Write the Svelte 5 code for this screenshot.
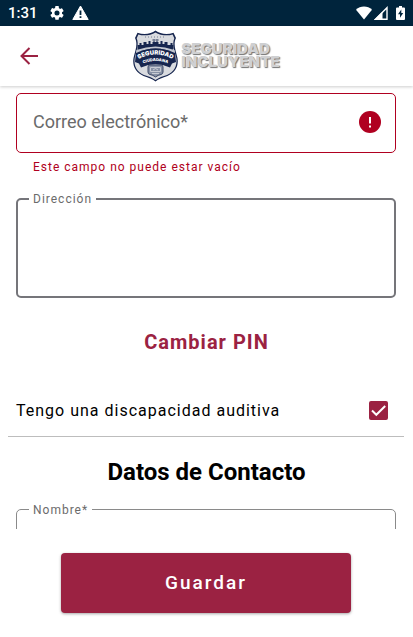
<script>
  let email = $state('');
  let address = $state('');
  let name = $state('');
  let hearing = $state(true);
</script>

<div class="screen">
  <div class="status">
    <div class="group left">
      <span class="time">1:31</span>
      <svg width="14" height="14" viewBox="2 2 20 20" aria-hidden="true"><path fill="#fff" d="M19.14 12.94c.04-.3.06-.61.06-.94s-.02-.64-.07-.94l2.03-1.58a.5.5 0 0 0 .12-.61l-1.92-3.32a.49.49 0 0 0-.59-.22l-2.39.96a7 7 0 0 0-1.62-.94l-.36-2.54A.48.48 0 0 0 13.92 2h-3.84a.48.48 0 0 0-.47.41l-.36 2.54c-.59.24-1.13.57-1.62.94l-2.39-.96a.48.48 0 0 0-.59.22L2.74 8.87a.48.48 0 0 0 .12.61l2.03 1.58a7.5 7.5 0 0 0 0 1.88l-2.03 1.58a.5.5 0 0 0-.12.61l1.92 3.32c.12.22.37.29.59.22l2.39-.96c.5.38 1.03.7 1.62.94l.36 2.54c.05.24.24.41.48.41h3.84c.24 0 .44-.17.47-.41l.36-2.54a7 7 0 0 0 1.62-.94l2.39.96c.22.08.47 0 .59-.22l1.92-3.32a.48.48 0 0 0-.12-.61zM12 15.6a3.6 3.6 0 1 1 0-7.2 3.6 3.6 0 0 1 0 7.2z"/></svg>
      <svg width="17" height="16" viewBox="0 0 17 16" aria-hidden="true"><path fill="#fff" stroke="#fff" stroke-linejoin="round" d="M8.500 1 16.200 14.500H.8z"/><path fill="#00243c" d="M7.600 5.500h1.800v4.500H7.600zM7.600 11.200h1.800V13H7.600z"/></svg>
    </div>
    <div class="group right">
      <svg width="16" height="14" viewBox="0 0 17 14" aria-hidden="true"><path fill="#fff" d="M8.500 14 0 3.500C2.400 1.400 5.300.2 8.500.2s6.100 1.200 8.500 3.300z"/></svg>
      <svg width="14" height="14" viewBox="0 0 14 14" aria-hidden="true"><path fill="none" stroke="#fff" stroke-width="1.400" d="M1.500 13.200H13V1.700z"/><path fill="#fff" d="M0 14 8.500 5.500V14z"/></svg>
      <svg class="battery" width="9" height="14" viewBox="0 0 9 14" aria-hidden="true"><path fill="#fff" d="M3 0h3v1.400h2q1 0 1 1V13q0 1-1 1H1q-1 0-1-1V2.400q0-1 1-1h2z"/><path fill="#00243c" d="M5.300 3.400 2 8.300h2v3.500L7.200 7H5.300z"/></svg>
    </div>
  </div>

  <header>
    <button class="back" type="button" aria-label="Volver">
      <svg width="18" height="18" viewBox="0 0 18 18" aria-hidden="true"><path fill="none" stroke="#9b2242" stroke-width="2" d="M18 9H2M9.500 1 1.500 9l8 8"/></svg>
    </button>
    <div class="brand">
      <svg width="45" height="52" viewBox="0 0 45 52" aria-hidden="true">
        <path fill="#17264f" d="M22.500.5C18 4 11 5 4.500 2.800L2 8c3 6 .5 12-1.500 20-1.500 9 3 15 10 18 5 1.500 9 3 12 5.500C25.500 49 29.500 47.500 34.500 46c7-3 11.500-9 10-18-2-8-4.500-14-1.500-20l-2.500-5.200C34 5 27 4 22.500.5z"/>
        <path fill="#d9dbdf" d="M22.500 2.400C18 5.200 11 6.200 5.400 4.500L3.700 8.200c2.400 6 0 12-2 20-1.200 8 2.500 13.800 9.300 16.900 4 1.300 8.500 2.600 11.500 5 3-2.400 7.500-3.700 11.500-5 6.800-3.100 10.500-8.900 9.300-16.900-2-8-4.400-14-2-20l-1.700-3.700C34 6.200 27 5.200 22.500 2.400z"/>
        <path fill="#17264f" d="M4.500 19v-4h2v-2h2v2h2v-3h3v2h2v-3h2v3h2v-2h1v-3h1v3h2v-3h1v3h1v2h2v-3h2v3h2v-2h3v3h3v-2h2v2h1v4l-2 2h-34z"/>
        <path stroke="#777f94" stroke-width="1" stroke-dasharray="1 2" d="M12 7h21M19 10h8"/>
        <path fill="#c3c7d0" d="M3.500 20Q22.500 13 41.500 20l.5 3Q22.500 14 3 23z"/>
        <path fill="#17264f" d="M3 23Q22.500 14 42 23l1 9-4 1.500-2 4Q22.500 31 8 37.500l-2-4L2 32z"/>
        <path id="arc-top" fill="none" d="M4 30Q22.500 19 41 30"/>
        <path id="arc-low" fill="none" d="M7 35Q22.500 27 38 35"/>
        <text class="seal big"><textPath href="#arc-top" startOffset="50%">SEGURIDAD</textPath></text>
        <text class="seal"><textPath href="#arc-low" startOffset="50%">CIUDADANA</textPath></text>
        <path fill="#8791a5" stroke="#3d4967" d="M17 35h11q2 0 2 2v5q0 2-2 2.500-3 .5-5.500 2.500-2.500-2-5.500-2.500-2-.5-2-2.500v-5q0-2 2-2z"/>
        <path fill="none" stroke="#c7cbd3" d="M17.500 37.500h10v4h-10zM20 40q2.500-3 5 0M19 43.500h7"/>
      </svg>
      <div class="wordmark"><span>SEGURIDAD</span><span>INCLUYENTE</span></div>
    </div>
  </header>

  <main>
    <div class="field error">
      <label for="email">Correo electrónico*</label>
      <input id="email" type="email" bind:value={email} aria-invalid="true" aria-describedby="email-help" />
      <svg width="22" height="22" viewBox="0 0 22 22" aria-hidden="true"><circle cx="11" cy="11" r="11" fill="#b00020"/><path fill="#fff" d="M10 6h2v6.500h-2zM10 14.500h2v2h-2z"/></svg>
    </div>
    <p class="help" id="email-help">Este campo no puede estar vacío</p>

    <div class="field address">
      <label for="address">Dirección</label>
      <textarea id="address" bind:value={address}></textarea>
    </div>

    <button class="pin" type="button">Cambiar PIN</button>

    <div class="option">
      <label for="hearing">Tengo una discapacidad auditiva</label>
      <span class="tick">
        <input id="hearing" type="checkbox" bind:checked={hearing} />
        {#if hearing}
          <svg width="19" height="19" viewBox="0 0 19 19" aria-hidden="true"><path fill="none" stroke="#fff" stroke-width="2" d="m3 9.500 4.300 4.300L16.200 5"/></svg>
        {/if}
      </span>
    </div>

    <h2>Datos de Contacto</h2>

    <div class="field name">
      <label for="name">Nombre*</label>
      <input id="name" type="text" bind:value={name} />
    </div>
  </main>

  <footer>
    <button class="save" type="button">Guardar</button>
  </footer>
</div>

<style>
  .screen {
    display: flex;
    flex-direction: column;
    height: 100vh;
    background: #fff;
    color: #000;
    font-family: Roboto, "Noto Sans", sans-serif;
  }
  .screen * { box-sizing: border-box; }
  button, input, textarea { font: inherit; }
  button { cursor: pointer; }

  .status {
    display: flex;
    flex: none;
    justify-content: space-between;
    height: 26px;
    padding: 0 8px;
    background: #00243c;
    color: #fff;
  }
  .group { display: flex; align-items: center; }
  .left { gap: 8px; }
  .right { gap: 2px; }
  .battery { margin-left: 6px; }
  .time { margin-right: 4px; font-size: 15px; font-weight: 500; line-height: 26px; }

  header {
    position: relative;
    z-index: 1;
    display: grid;
    flex: none;
    grid-template-columns: 1fr auto 1fr;
    align-items: center;
    height: 60px;
    background: #fff;
    box-shadow: 0 1px 3px rgb(0 0 0 / 20%);
  }
  .back {
    display: flex;
    justify-self: start;
    margin-left: 12px;
    padding: 8px;
    border: 0;
    background: none;
  }
  .brand { display: flex; align-items: center; gap: 3px; }
  .seal {
    fill: #fff;
    font: 900 4px Inter, sans-serif;
    text-anchor: middle;
  }
  .big { font-size: 6px; }
  .wordmark {
    display: flex;
    flex-direction: column;
    padding-bottom: 3px;
    color: #cfd0d2;
    font: 900 15px/13px Inter, sans-serif;
    text-shadow: 1px 1px 1px #737373;
  }

  main {
    flex: 1;
    min-height: 0;
    padding: 7px 8px 0;
    overflow-y: auto;
    scrollbar-width: none;
  }
  .field { position: relative; margin: 0 9px 0 8px; }
  .field input, .field textarea {
    display: block;
    width: 100%;
    height: 60px;
    padding: 0 16px;
    border: 1px solid #8a8a8a;
    border-radius: 5px;
    background: none;
    outline: 0;
    color: #000;
    font-size: 18px;
    resize: none;
  }
  .field label {
    position: absolute;
    top: -8px;
    left: 13px;
    padding: 0 4px;
    background: #fff;
    color: #6b6b6b;
    font-size: 12px;
    line-height: 18px;
    letter-spacing: 1px;
  }
  .field.error input { border-color: #b00020; }
  .field.error label {
    top: 17px;
    font-size: 18px;
    line-height: 24px;
    letter-spacing: normal;
  }
  .error svg { position: absolute; top: 18px; right: 15px; }
  .field.address textarea {
    height: 100px;
    padding: 16px;
    border: 2px solid #75757a;
  }
  .help {
    margin: 4px 25px 0;
    color: #b00020;
    font-size: 12px;
    line-height: 20px;
    letter-spacing: 1px;
  }
  .address { margin-top: 21px; }
  .pin {
    display: block;
    margin: 20px auto 0;
    padding: 0 8px;
    border: 0;
    background: none;
    color: #9b2242;
    font-size: 20px;
    font-weight: 700;
    line-height: 48px;
    letter-spacing: 1px;
  }
  .option {
    display: flex;
    align-items: center;
    justify-content: space-between;
    height: 52px;
    margin: 19px 1px 0 0;
    padding: 0 16px 0 8px;
    border-bottom: 1px solid #bdbdbd;
    font-size: 16px;
    letter-spacing: 1px;
  }
  .tick { position: relative; display: flex; }
  .tick input {
    width: 19px;
    height: 19px;
    margin: 0;
    border: 2px solid #9b2242;
    border-radius: 2px;
    appearance: none;
  }
  .tick input:checked { background: #9b2242; }
  .tick svg { position: absolute; inset: 0; pointer-events: none; }
  h2 {
    margin: 19px 0 21px;
    font-size: 24px;
    font-weight: 700;
    line-height: 32px;
    text-align: center;
  }

  footer { flex: none; padding: 24px 62px 24px 61px; }
  .save {
    display: block;
    width: 100%;
    padding: 0;
    border: 0;
    border-radius: 4px;
    background: #9b2242;
    box-shadow: 0 1px 3px rgb(0 0 0 / 35%);
    color: #fff;
    font-size: 19px;
    font-weight: 500;
    line-height: 60px;
    letter-spacing: 2px;
  }
</style>
